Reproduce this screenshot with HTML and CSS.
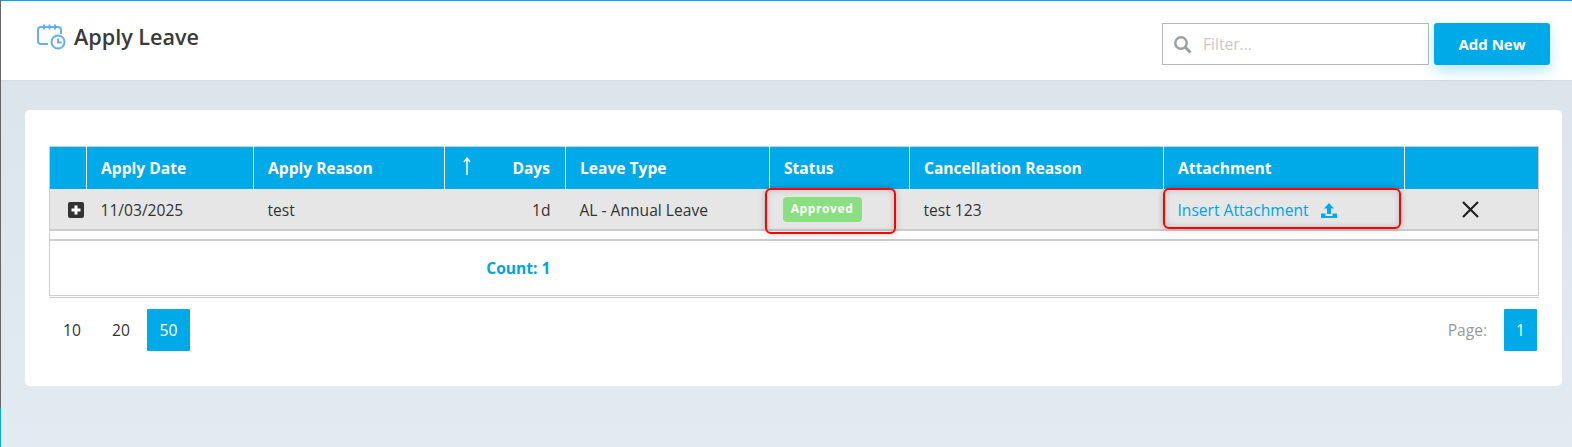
FILE: index.html
```html
<!DOCTYPE html>
<html lang="en">
<head>
    <meta charset="UTF-8">
    <meta name="viewport" content="width=device-width, initial-scale=1.0">
    <title>Apply Leave</title>
    <link rel="stylesheet" href="styles.css">
</head>
<body>
    <header class="top-bar">
        <div class="page-title">
            <svg class="title-icon" width="29" height="26" viewBox="0 0 29 26" fill="none" stroke="#64aef5" stroke-width="2">
                <path d="M11 20H4a3 3 0 0 1-3-3V6a3 3 0 0 1 3-3h17a3 3 0 0 1 3 3v4"/>
                <path d="M7 0.5v5M12.5 0.5v5M18 0.5v5"/>
                <circle cx="21" cy="18" r="6.5"/>
                <path d="M21 14.5v4h3.5"/>
            </svg>
            <h1>Apply Leave</h1>
        </div>
        <div class="top-actions">
            <div class="filter-box">
                <svg width="19" height="19" viewBox="0 0 19 19" fill="none" stroke="#9aa0a6">
                    <circle cx="8" cy="8" r="5.7" stroke-width="2.4"/>
                    <path d="M12 12l5.5 5.5" stroke-width="3"/>
                </svg>
                <input type="text" placeholder="Filter...">
            </div>
            <button class="add-button">Add New</button>
        </div>
    </header>

    <main class="card">
        <table class="leave-table">
            <colgroup>
                <col class="col-expand">
                <col class="col-date">
                <col class="col-reason">
                <col class="col-days">
                <col class="col-type">
                <col class="col-status">
                <col class="col-cancel">
                <col class="col-attach">
                <col class="col-delete">
            </colgroup>
            <thead>
                <tr>
                    <th></th>
                    <th>Apply Date</th>
                    <th>Apply Reason</th>
                    <th class="days-head">
                        <svg class="sort-arrow" width="8" height="18" viewBox="0 0 8 18" fill="none" stroke="#fff" stroke-width="1.5">
                            <path d="M4 18V2M1 5l3-4 3 4"/>
                        </svg>
                        Days
                    </th>
                    <th>Leave Type</th>
                    <th>Status</th>
                    <th>Cancellation Reason</th>
                    <th>Attachment</th>
                    <th></th>
                </tr>
            </thead>
            <tbody>
                <tr class="data-row">
                    <td class="expand-cell">
                        <svg width="16" height="16" viewBox="0 0 16 16">
                            <rect width="16" height="16" rx="2" fill="#333"/>
                            <path d="M8 3.5v9M3.5 8h9" stroke="#fff" stroke-width="3"/>
                        </svg>
                    </td>
                    <td>11/03/2025</td>
                    <td>test</td>
                    <td class="right">1d</td>
                    <td>AL - Annual Leave</td>
                    <td class="marked">
                        <span class="badge">Approved</span>
                        <span class="red-box status-box"></span>
                    </td>
                    <td>test 123</td>
                    <td class="marked">
                        <a class="attach-link" href="#">Insert Attachment
                            <svg width="16" height="15" viewBox="0 0 16 15" fill="#00a9e8">
                                <path d="M8 0l5 5.5H10V11H6V5.5H3z"/>
                                <path d="M0 10.5h4.5V13h7v-2.5H16V15H0z"/>
                            </svg>
                        </a>
                        <span class="red-box attach-box"></span>
                    </td>
                    <td class="delete-cell">
                        <svg width="17" height="17" viewBox="0 0 17 17" stroke="#222" stroke-width="2.2">
                            <path d="M1 1l15 15M16 1L1 16"/>
                        </svg>
                    </td>
                </tr>
                <tr class="spacer-row"><td colspan="9"></td></tr>
            </tbody>
            <tfoot>
                <tr class="summary-row">
                    <td colspan="4" class="right"><span class="count">Count: 1</span></td>
                    <td colspan="5"></td>
                </tr>
            </tfoot>
        </table>

        <div class="pager">
            <div class="page-sizes">
                <span class="page-btn first-size">10</span>
                <span class="page-btn">20</span>
                <span class="page-btn active">50</span>
            </div>
            <div class="page-numbers">
                <span class="page-label">Page:</span>
                <span class="page-btn active page-one">1</span>
            </div>
        </div>
    </main>
</body>
</html>
```

FILE: styles.css
```css
* {
    box-sizing: border-box;
}

body {
    margin: 0;
    height: 447px;
    overflow: hidden;
    font-family: "Open Sans", Arial, sans-serif;
    font-size: 15.6px;
    color: #333;
    background: linear-gradient(#dbe3ea, #e2eaf2);
    border-left: 1px solid #666;
    border-image: linear-gradient(#666 407px, #00a9e8 407px) 1;
}

.top-bar {
    display: flex;
    justify-content: space-between;
    height: 80px;
    padding: 22px 22px 0 36px;
    background: #fff;
    border-top: 1px solid #00a9e8;
    box-shadow: 0 1px 1px rgba(0, 0, 0, 0.03);
}

.page-title {
    display: flex;
    align-items: flex-start;
    gap: 8px;
}

.title-icon {
    margin-top: 1px;
}

h1 {
    margin: -1px 0 0;
    font-size: 21.6px;
    font-weight: 600;
    line-height: 30px;
    color: #3a3a3a;
}

.top-actions {
    display: flex;
    gap: 5px;
}

.filter-box {
    display: flex;
    align-items: center;
    gap: 9px;
    width: 267px;
    height: 42px;
    padding-left: 10px;
    border: 1px solid #b8b8b8;
}

.filter-box input {
    flex: 1;
    min-width: 0;
    border: none;
    outline: none;
    font-family: inherit;
    font-size: 15.6px;
    color: #333;
}

.filter-box input::placeholder {
    color: #c8c8c8;
}

.add-button {
    width: 116px;
    height: 42px;
    border: none;
    border-radius: 3px;
    background: #00a9e8;
    color: #fff;
    font-family: inherit;
    font-size: 15px;
    font-weight: 700;
    box-shadow: 0 6px 14px rgba(0, 169, 232, 0.28);
}

.card {
    margin: 30px 10px 0 24px;
    height: 276px;
    padding: 36px 24px 0 24px;
    background: #fff;
    border-radius: 5px;
}

.leave-table {
    width: 1489px;
    table-layout: fixed;
    border-collapse: collapse;
    border: 1px solid #ccc;
    box-shadow: 0 1px 0 #fff, 0 2px 0 #ccc;
}

.col-expand { width: 37px; }
.col-date { width: 167px; }
.col-reason { width: 191px; }
.col-days { width: 121px; }
.col-type { width: 204px; }
.col-status { width: 140px; }
.col-cancel { width: 254px; }
.col-attach { width: 241px; }
.col-delete { width: 134px; }

.leave-table th {
    height: 42px;
    padding: 0 14px;
    background: #00a9e8;
    border-left: 1px solid #fff;
    color: #fff;
    font-size: 15.6px;
    font-weight: 700;
    text-align: left;
}

.leave-table th:first-child {
    border-left: none;
}

.days-head {
    position: relative;
    text-align: right !important;
    padding-right: 15px !important;
}

.sort-arrow {
    position: absolute;
    left: 18px;
    top: 10px;
}

.data-row td {
    height: 41px;
    padding: 2px 14px 0;
    background: #e6e6e6;
    border-bottom: 2px solid #ccc;
    font-size: 15.6px;
}

.data-row td.right {
    padding-right: 15px;
}

.right {
    text-align: right;
}

.expand-cell {
    text-align: right;
    padding: 6px 3px 0 0 !important;
}

.delete-cell {
    text-align: center;
}

.delete-cell svg {
    display: block;
    margin: 0 0 0 43px;
}

.marked {
    position: relative;
}

.badge {
    display: inline-block;
    width: 79px;
    height: 25px;
    border-radius: 4px;
    background: #8ae080;
    color: #fff;
    font-size: 12px;
    font-weight: 700;
    line-height: 24px;
    letter-spacing: 0.6px;
    text-align: center;
    vertical-align: middle;
    margin-left: -1px;
}

.attach-link {
    color: #00a3e4;
    text-decoration: none;
}

.attach-link svg {
    margin-left: 8px;
    vertical-align: -2px;
}

/* red marks drawn on top of the cells */
.red-box {
    position: absolute;
    top: -1px;
    border: 2px solid #f00;
    border-radius: 6px;
    box-shadow: 0 0 6px rgba(0, 0, 0, 0.25), inset 0 0 6px rgba(0, 0, 0, 0.18);
}

.status-box {
    left: -5px;
    width: 131px;
    height: 46px;
}

.attach-box {
    left: -1px;
    width: 238px;
    height: 41px;
}

.spacer-row td {
    height: 10px;
    border-bottom: 2px solid #ccc;
}

.summary-row td {
    height: 56px;
    padding: 0 14px;
}

.summary-row td.right {
    padding-right: 15px;
}

.count {
    color: #00a3e4;
    font-weight: 700;
}

.pager {
    display: flex;
    justify-content: space-between;
    margin-top: 13px;
}

.page-sizes, .page-numbers {
    display: flex;
    align-items: center;
}

.page-btn {
    display: flex;
    align-items: center;
    justify-content: center;
    width: 48px;
    height: 42px;
    font-size: 15.6px;
}

.first-size {
    padding-right: 2px;
}

.page-sizes .active {
    width: 43px;
    margin-left: 2px;
}

.active {
    background: #00a9e8;
    border-radius: 1px;
    color: #fff;
}

.page-label {
    margin-right: 17px;
    color: #999;
}

.page-one {
    width: 33px;
    margin-right: 1px;
}
```
